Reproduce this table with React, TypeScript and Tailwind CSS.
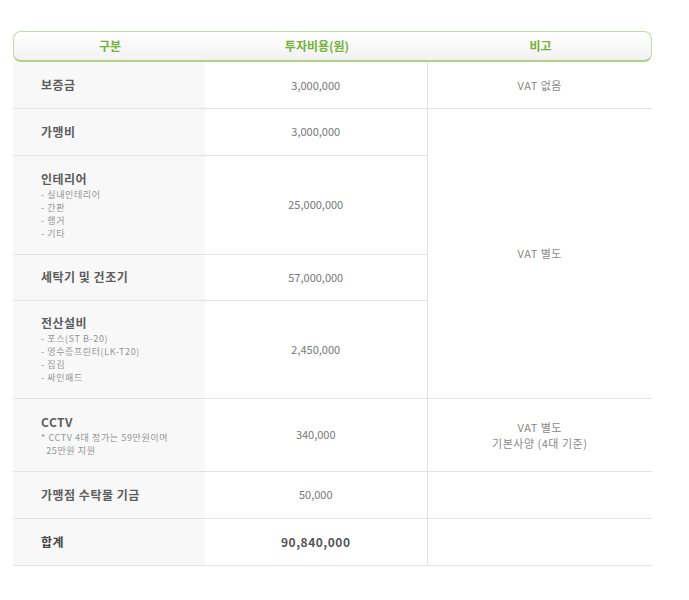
const FONT = "font-['Noto_Sans_CJK_KR','Noto_Sans',sans-serif]";

type Row = {
  label: string;
  subs?: string[];
  amount: string;
  h: string;
  total?: boolean;
};

const rows: Row[] = [
  { label: '보증금', amount: '3,000,000', h: 'h-[46px]' },
  { label: '가맹비', amount: '3,000,000', h: 'h-[47px]' },
  {
    label: '인테리어',
    subs: ['- 실내인테리어', '- 간판', '- 행거', '- 기타'],
    amount: '25,000,000',
    h: 'h-[99px]',
  },
  { label: '세탁기 및 건조기', amount: '57,000,000', h: 'h-[46px]' },
  {
    label: '전산설비',
    subs: ['- 포스(ST B-20)', '- 영수증프린터(LK-T20)', '- 집김', '- 싸인패드'],
    amount: '2,450,000',
    h: 'h-[98px]',
  },
  {
    label: 'CCTV',
    subs: ['* CCTV 4대 정가는 59만원이며', '\u00a0\u00a025만원 지원'],
    amount: '340,000',
    h: 'h-[73px]',
  },
  { label: '가맹점 수탁물 기금', amount: '50,000', h: 'h-[47px]' },
  { label: '합계', amount: '90,840,000', h: 'h-[47px]', total: true },
];

function Note({ i }: { i: number }) {
  if (i === 0) return <>VAT 없음</>;
  if (i === 1) return <>VAT 별도</>;
  if (i === 5)
    return (
      <>
        VAT 별도
        <br />
        기본사양 (4대 기준)
      </>
    );
  return null;
}

export default function App() {
  return (
    <div className={`${FONT} bg-white min-h-[600px] pt-[31px] pl-[13px]`}>
      <div className="w-[639px]">
        {/* 헤더 */}
        <div className="grid grid-cols-[192px_222px_225px] h-[31px] items-center rounded-[8px] border border-[#c5dca6] border-b-[#b0d08a] border-b-2 bg-gradient-to-b from-white to-[#f2f2f2] text-[12px] font-bold text-[#74b236]">
          <div className="text-center">구분</div>
          <div className="text-center">투자비용(원)</div>
          <div className="text-center">비고</div>
        </div>

        <table className="w-full border-collapse table-fixed">
          <colgroup>
            <col className="w-[192px]" />
            <col className="w-[222px]" />
            <col className="w-[225px]" />
          </colgroup>
          <tbody>
            {rows.map((r, i) => (
              <tr key={r.label} className={`${r.h} border-b border-[#e3e3e3]`}>
                <td className="bg-[#f8f8f8] pl-[28px] align-middle">
                  <div
                    className={`text-[12px] font-bold leading-[18px] tracking-[0.5px] ${
                      r.total ? 'text-[#444]' : 'text-[#5c5c5c]'
                    }`}
                  >
                    {r.label}
                  </div>
                  {r.subs?.map((s) => (
                    <div
                      key={s}
                      className="text-[9px] leading-[13px] tracking-[0.6px] text-[#959595]"
                    >
                      {s}
                    </div>
                  ))}
                </td>
                <td
                  className={`text-center align-middle ${
                    r.total
                      ? 'text-[12px] font-bold text-[#555] tracking-[0.5px]'
                      : 'text-[11px] text-[#777]'
                  }`}
                >
                  {r.amount}
                </td>
                {i !== 2 && i !== 3 && i !== 4 && (
                  <td
                    rowSpan={i === 1 ? 4 : 1}
                    className="border-l border-[#e3e3e3] text-center align-middle text-[11px] leading-[16px] text-[#888] tracking-[0.5px]"
                  >
                    <Note i={i} />
                  </td>
                )}
              </tr>
            ))}
          </tbody>
        </table>
      </div>
    </div>
  );
}
